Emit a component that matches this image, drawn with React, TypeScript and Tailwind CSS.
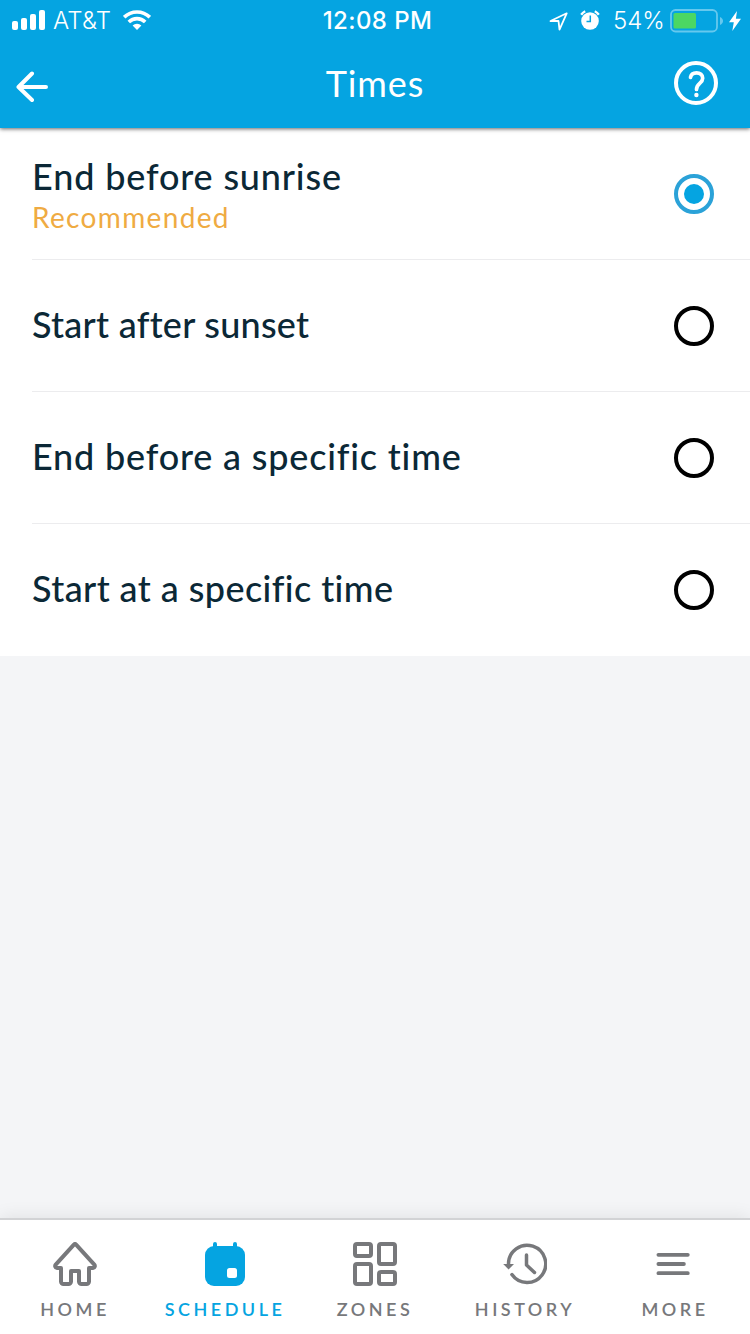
import { useState } from 'react';
import type { ReactNode } from 'react';

interface TimeOption {
  id: string;
  label: string;
  hint?: string;
  spacing: string;
}

interface Tab {
  id: string;
  label: string;
  icon: ReactNode;
}

const OPTIONS: TimeOption[] = [
  { id: 'sunrise', label: 'End before sunrise', hint: 'Recommended', spacing: 'tracking-[0.84px]' },
  { id: 'sunset', label: 'Start after sunset', spacing: 'pb-1 tracking-[0.27px]' },
  { id: 'end', label: 'End before a specific time', spacing: 'pb-1 tracking-[0.81px]' },
  { id: 'start', label: 'Start at a specific time', spacing: 'pb-1 tracking-[0.42px]' },
];

function HomeIcon() {
  return (
    <svg width="44" height="44" viewBox="0 0 44 44" fill="none" stroke="currentColor" strokeWidth="4" strokeLinejoin="round">
      <path d="M20.9 2.6a1.6 1.6 0 0 1 2.2 0L41.3 22.6c1 1.2.5 3.4-1.2 3.4H36v13.5a2.5 2.5 0 0 1-2.5 2.5h-5a2.5 2.5 0 0 1-2.5-2.5V29h-8v10.5a2.5 2.5 0 0 1-2.5 2.5h-5a2.5 2.5 0 0 1-2.5-2.5V26H3.9c-1.7 0-2.2-2.2-1.2-3.4z" />
    </svg>
  );
}

function ScheduleIcon() {
  return (
    <svg width="44" height="44" viewBox="0 0 44 44">
      <path d="M12 2v5M32 2v5" stroke="currentColor" strokeWidth="4" strokeLinecap="round" />
      <rect x="2" y="4" width="40" height="40" rx="9" fill="currentColor" />
      <rect x="24" y="26" width="10" height="10" rx="2.5" fill="#fff" />
    </svg>
  );
}

function ZonesIcon() {
  return (
    <svg width="44" height="44" viewBox="0 0 44 44" fill="none" stroke="currentColor" strokeWidth="4">
      <rect x="2" y="2" width="16" height="12" rx="2" />
      <rect x="26" y="2" width="16" height="20" rx="2" />
      <rect x="2" y="22" width="16" height="20" rx="2" />
      <rect x="26" y="30" width="16" height="12" rx="2" />
    </svg>
  );
}

function HistoryIcon() {
  return (
    <svg width="44" height="44" viewBox="0 0 44 44" fill="none" stroke="currentColor" strokeWidth="3.5" strokeLinecap="round">
      <path d="M5.5 22a18.6 18.6 0 1 1 3.4 10.6" />
      <path d="M23.5 13v10l8 7.5" strokeLinejoin="round" />
      <path d="M.2 22h10.8L5.6 27.5z" fill="currentColor" stroke="none" />
    </svg>
  );
}

function MoreIcon() {
  return (
    <svg width="44" height="44" viewBox="0 0 44 44" stroke="currentColor" strokeWidth="3.8" strokeLinecap="round">
      <path d="M5.4 12.8h29.4M5.4 22h25.5M5.4 31.2h29.4" />
    </svg>
  );
}

const TABS: Tab[] = [
  { id: 'home', label: 'HOME', icon: <HomeIcon /> },
  { id: 'schedule', label: 'SCHEDULE', icon: <ScheduleIcon /> },
  { id: 'zones', label: 'ZONES', icon: <ZonesIcon /> },
  { id: 'history', label: 'HISTORY', icon: <HistoryIcon /> },
  { id: 'more', label: 'MORE', icon: <MoreIcon /> },
];

function StatusBar() {
  return (
    <div className="grid h-10 grid-cols-3 items-center pt-0.5 font-[Inter,sans-serif] text-2xl leading-[38px]">
      <div className="flex items-center pl-3">
        <svg className="-mt-0.5" width="33" height="20" viewBox="0 0 33 20" fill="currentColor">
          <rect x="0" y="11" width="6" height="9" rx="2" />
          <rect x="9" y="8" width="6" height="12" rx="2" />
          <rect x="18" y="4" width="6" height="16" rx="2" />
          <rect x="27" y="0" width="6" height="20" rx="2" />
        </svg>
        <span className="ml-2 w-[70px] font-light tracking-[0.2px]">AT&amp;T</span>
        <svg className="-mt-0.5" width="28" height="20" viewBox="0 0 28 20" fill="none" stroke="currentColor" strokeWidth="3.6">
          <path d="M1.2 7.2a18.3 18.3 0 0 1 25.6 0" />
          <path d="M5.8 12a11.7 11.7 0 0 1 16.4 0" />
          <path d="M9.6 15.6a6.3 6.3 0 0 1 8.8 0L14 20z" fill="currentColor" stroke="none" />
        </svg>
      </div>

      <div className="pl-[5px] text-center font-medium tracking-[0.4px] whitespace-nowrap">12:08 PM</div>

      <div className="flex items-center justify-end pr-[9px]">
        <svg width="19" height="19" viewBox="0 0 19 19" fill="none" stroke="currentColor" strokeWidth="1.8" strokeLinejoin="round">
          <path d="M17.7 1.3L1.5 9h8l1 8.6z" />
        </svg>
        <svg className="-mt-0.5 ml-3" width="20" height="20" viewBox="0 0 20 20">
          <circle cx="10" cy="11" r="8.8" fill="currentColor" />
          <path d="M1.2 4.8A11 11 0 0 1 5.2 1.3M18.8 4.8A11 11 0 0 0 14.8 1.3" stroke="currentColor" strokeWidth="2.4" fill="none" />
          <path d="M10.3 5.5v6H6.5" stroke="#05a4e1" strokeWidth="1.5" fill="none" />
        </svg>
        <span className="ml-[13px] w-[57px] font-light">54%</span>
        <svg width="53" height="24" viewBox="0 0 53 24" fill="none">
          <rect x="1" y="1" width="46" height="21.5" rx="4.5" stroke="#66c8ee" strokeWidth="1.8" />
          <rect x="3.5" y="4" width="22.5" height="15.5" rx="1.5" fill="#4bd763" />
          <path d="M50 8c4 1.5 4 6.5 0 8z" fill="#66c8ee" />
        </svg>
        <svg className="ml-1.5" width="12" height="20" viewBox="0 0 12 20" fill="currentColor">
          <path d="M8 0L0 11.3h4.8L3.3 20 12 7.8H6.9z" />
        </svg>
      </div>
    </div>
  );
}

function NavBar() {
  return (
    <div className="flex h-[88px] items-center justify-between pr-8 pl-4">
      <button className="w-[60px]">
        <svg className="mt-1.5" width="32" height="32" viewBox="0 0 32 32" fill="none" stroke="currentColor" strokeWidth="4" strokeLinecap="round" strokeLinejoin="round">
          <path d="M30 16H2.5M16 2.5L2.5 16 16 29" />
        </svg>
      </button>
      <h1 className="pb-0.5 text-[36px] tracking-[0.9px]">Times</h1>
      <button className="flex w-11">
        <svg className="-mt-0.5" width="44" height="44" viewBox="0 0 44 44" fill="none" stroke="currentColor" strokeLinecap="round" strokeLinejoin="round">
          <circle cx="22" cy="22" r="20" strokeWidth="4" />
          <path d="M16.5 16.4c.5-3 2.9-4.6 6-4.6 3.5 0 6.2 2 6.2 5.4 0 2.3-1.2 3.6-3 5.2-2 1.8-3.2 3-3.2 6" strokeWidth="3.7" />
          <circle cx="22.4" cy="34" r="2.2" fill="currentColor" stroke="none" />
        </svg>
      </button>
    </div>
  );
}

export default function App() {
  const [selected, setSelected] = useState('sunrise');
  const [activeTab, setActiveTab] = useState('schedule');

  return (
    <div className="flex h-[1334px] w-[750px] flex-col overflow-hidden bg-[#f4f5f7] font-[Lato,sans-serif]">
      <header className="relative z-10 h-32 bg-[#05a4e1] text-white shadow-[0_1px_4px_rgba(0,0,0,0.6)]">
        <StatusBar />
        <NavBar />
      </header>

      {/* Opciones de horario */}
      <main className="bg-white pl-8">
        {OPTIONS.map((option) => (
          <div
            key={option.id}
            onClick={() => setSelected(option.id)}
            className="flex h-[132px] cursor-pointer items-center justify-between border-b border-[#ececee] pr-9 last:border-transparent"
          >
            <div className={option.hint ? 'pt-[3px]' : ''}>
              <p className={`text-[36px] leading-[44px] font-medium whitespace-nowrap text-[#0b2836] ${option.spacing}`}>{option.label}</p>
              {option.hint && (
                <p className="text-[28px] leading-[39px] tracking-[1.35px] text-[#efab42]">{option.hint}</p>
              )}
            </div>
            <span
              className={`flex size-10 items-center justify-center rounded-full border-4 ${
                selected === option.id ? 'border-[#2ba2d8]' : 'border-black'
              }`}
            >
              {selected === option.id && <span className="size-5 rounded-full bg-[#05a4e1]" />}
            </span>
          </div>
        ))}
      </main>

      <nav className="mt-auto grid h-[116px] grid-cols-5 border-t-2 border-[#d2d3d5] bg-white shadow-[0_-2px_16px_rgba(0,0,0,0.08)]">
        {TABS.map((tab) => (
          <button
            key={tab.id}
            onClick={() => setActiveTab(tab.id)}
            className={`flex flex-col items-center pt-[22px] ${activeTab === tab.id ? 'text-[#05a4e1]' : 'text-[#77787b]'}`}
          >
            {tab.icon}
            <span className="mt-[11px] text-[18px] leading-6 font-semibold tracking-[3.5px]">{tab.label}</span>
          </button>
        ))}
      </nav>
    </div>
  );
}
